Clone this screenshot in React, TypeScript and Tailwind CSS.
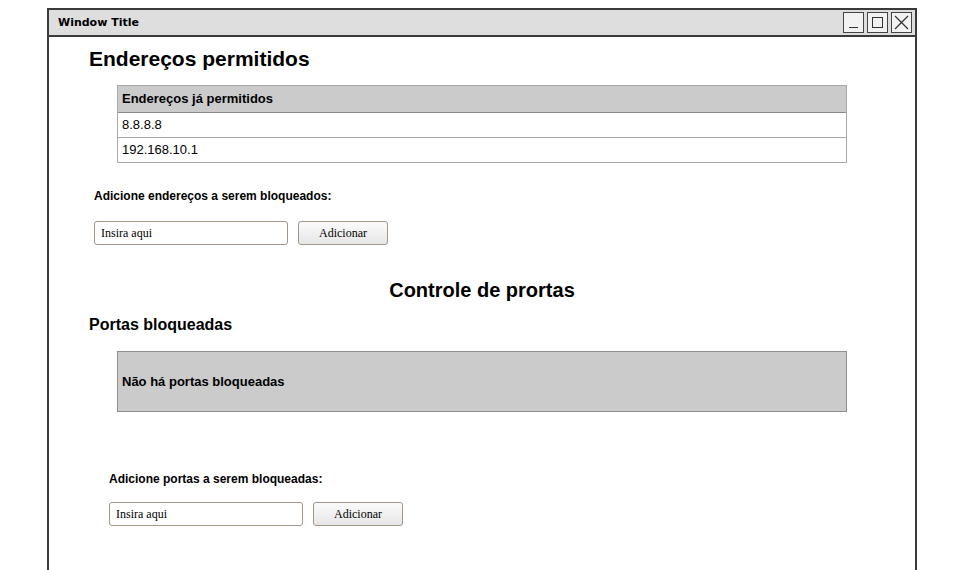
import React from "react";

const sans = { fontFamily: '"Liberation Sans", Arial, sans-serif' };

function AddRow({ label, indent, gap }: { label: string; indent: string; gap: string }) {
  return (
    <div className={indent}>
      <p className="text-[12px] font-bold leading-[14px] text-black">{label}</p>
      <div className={`${gap} flex items-center gap-[10px]`}>
        <input
          defaultValue="Insira aqui"
          className="h-[24px] w-[194px] rounded-[3px] border border-[#a3978a] bg-white px-[6px] text-[12px] text-black outline-none"
          style={{ fontFamily: '"Liberation Serif", "Times New Roman", serif' }}
        />
        <button
          className="h-[24px] w-[90px] rounded-[3px] border border-[#a3978a] bg-gradient-to-b from-[#fbfbfb] to-[#e6e6e6] text-[12px] text-black"
          style={{ fontFamily: '"Liberation Serif", "Times New Roman", serif' }}
        >
          Adicionar
        </button>
      </div>
    </div>
  );
}

export default function App() {
  return (
    <div className="h-[570px] w-[954px] overflow-hidden bg-white" style={sans}>
      <div className="ml-[47px] mt-[8px] h-[562px] w-[870px] border-x-2 border-t-2 border-[#3a3a3a]">
        <div className="flex h-[27px] items-center justify-between border-b-2 border-[#3a3a3a] bg-[#dedede] pl-[9px] pr-[3px]">
          <span
            className="pt-[1px] text-[11px] font-bold text-black"
            style={{ fontFamily: '"Comic Sans MS", "DejaVu Sans", sans-serif' }}
          >
            Window Title
          </span>
          <div className="flex gap-[3px]">
            <div className="flex h-[21px] w-[21px] items-end justify-center border-[1.5px] border-[#444] bg-[#f2f2f2] pb-[4px]">
              <div className="h-[1.5px] w-[9px] bg-[#333]" />
            </div>
            <div className="flex h-[21px] w-[21px] items-center justify-center border-[1.5px] border-[#444] bg-[#f2f2f2]">
              <div className="h-[11px] w-[11px] border-[1.5px] border-[#333]" />
            </div>
            <div className="flex h-[21px] w-[21px] items-center justify-center border-[1.5px] border-[#444] bg-[#f2f2f2]">
              <svg width="15" height="15" viewBox="0 0 15 15">
                <path d="M1 1 L14 14 M14 1 L1 14" stroke="#333" strokeWidth="1.2" />
              </svg>
            </div>
          </div>
        </div>

        <div className="pl-[40px] pt-[10px]">
          <h1 className="text-[21px] font-bold leading-[24px] text-black">Endereços permitidos</h1>

          <div className="ml-[28px] mt-[14px] w-[730px] border border-[#a8a8a8] text-[13px] text-black">
            <div className="flex h-[27px] items-center border-b border-[#8a8a8a] bg-[#cbcbcb] px-[4px] font-bold">
              Endereços já permitidos
            </div>
            <div className="flex h-[25px] items-center border-b border-[#a8a8a8] px-[4px]">8.8.8.8</div>
            <div className="flex h-[24px] items-center px-[4px]">192.168.10.1</div>
          </div>

          <div className="mt-[26px]">
            <AddRow label="Adicione endereços a serem bloqueados:" indent="ml-[5px]" gap="mt-[18px]" />
          </div>

          <h2 className="mr-[40px] mt-[33px] text-center text-[20px] font-bold leading-[24px] text-black">
            Controle de prortas
          </h2>

          <h3 className="mt-[13px] text-[16px] font-bold leading-[20px] text-black">Portas bloqueadas</h3>

          <div className="ml-[28px] mt-[16px] flex h-[61px] w-[730px] items-center border border-[#8f8f8f] bg-[#cbcbcb] px-[4px] pt-[1px] text-[13px] font-bold text-black">
            Não há portas bloqueadas
          </div>

          <div className="mt-[60px]">
            <AddRow label="Adicione portas a serem bloqueadas:" indent="ml-[20px]" gap="mt-[16px]" />
          </div>
        </div>
      </div>
    </div>
  );
}
